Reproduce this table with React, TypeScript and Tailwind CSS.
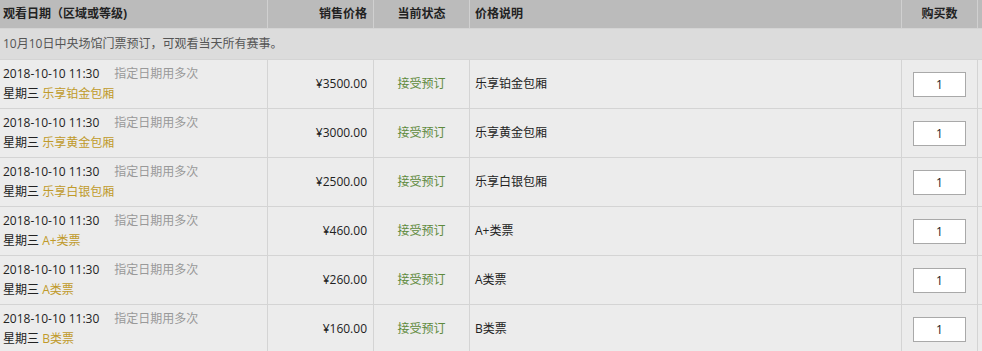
const rows = [
  { name: "乐享铂金包厢", price: "¥3500.00" },
  { name: "乐享黄金包厢", price: "¥3000.00" },
  { name: "乐享白银包厢", price: "¥2500.00" },
  { name: "A+类票", price: "¥460.00" },
  { name: "A类票", price: "¥260.00" },
  { name: "B类票", price: "¥160.00" },
];

const font = { fontFamily: '"Open Sans", "Noto Sans CJK SC", sans-serif' };

export default function App() {
  return (
    <div
      className="w-[982px] h-[351px] overflow-hidden bg-[#ececec] text-[12px] text-[#222]"
      style={font}
    >
      {/* header */}
      <div className="flex h-[29px] bg-[#bbbbbb] border-b border-[#d4d4d4] font-bold leading-[28px]">
        <div className="w-[268px] shrink-0 border-r border-[#d0d0d0] pl-[3px]">观看日期（区域或等级)</div>
        <div className="w-[106px] shrink-0 border-r border-[#d0d0d0] pr-[6px] text-right">销售价格</div>
        <div className="w-[96px] shrink-0 border-r border-[#d0d0d0] text-center">当前状态</div>
        <div className="w-[432px] shrink-0 border-r border-[#d0d0d0] pl-[5px]">价格说明</div>
        <div className="w-[76px] shrink-0 border-r border-[#d0d0d0] text-center">购买数</div>
        <div className="flex-1" />
      </div>

      {/* notice */}
      <div className="h-[31px] bg-[#dcdcdc] border-b border-[#d4d4d4] pl-[3px] leading-[30px] text-[#555]">
        10月10日中央场馆门票预订，可观看当天所有赛事。
      </div>

      {rows.map((r) => (
        <div key={r.name} className="flex h-[49px] border-b border-[#d4d4d4]">
          <div className="w-[268px] shrink-0 border-r border-[#d4d4d4] pl-[3px] pt-[4px] leading-[20px]">
            <div>
              2018-10-10 11:30<span className="ml-[15px] text-[#999]">指定日期用多次</span>
            </div>
            <div>
              星期三 <span className="text-[#c09a2a]">{r.name}</span>
            </div>
          </div>
          <div className="w-[106px] shrink-0 border-r border-[#d4d4d4] pr-[6px] text-right leading-[48px]">
            {r.price}
          </div>
          <div className="w-[96px] shrink-0 border-r border-[#d4d4d4] text-center leading-[48px] text-[#5e8a3c]">
            接受预订
          </div>
          <div className="w-[432px] shrink-0 border-r border-[#d4d4d4] pl-[5px] leading-[48px]">{r.name}</div>
          <div className="w-[76px] shrink-0 border-r border-[#d4d4d4] flex items-center pl-[11px]">
            <input
              defaultValue="1"
              className="w-[53px] h-[25px] border border-[#a9a9a9] bg-white text-center text-[12px] text-[#222] outline-none"
              style={font}
            />
          </div>
          <div className="flex-1" />
        </div>
      ))}
    </div>
  );
}
